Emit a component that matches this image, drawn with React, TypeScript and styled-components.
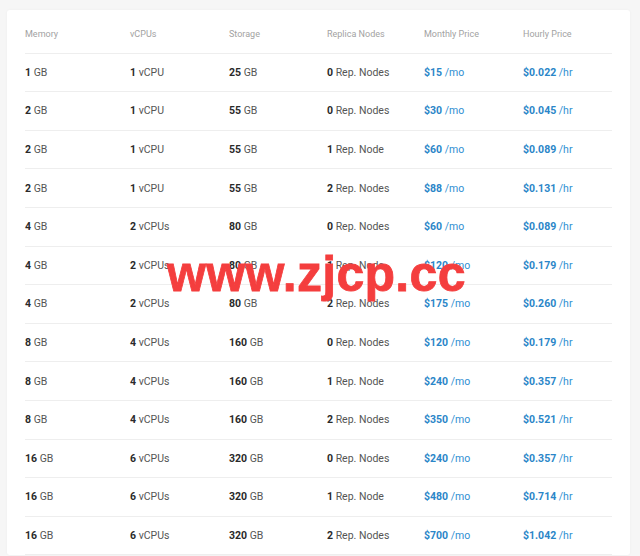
import styled, { createGlobalStyle } from "styled-components";

type Plan = {
  mem: number;
  cpu: number;
  disk: number;
  nodes: number;
  month: number;
  hour: string;
};

const plans: Plan[] = [
  { mem: 1, cpu: 1, disk: 25, nodes: 0, month: 15, hour: "0.022" },
  { mem: 2, cpu: 1, disk: 55, nodes: 0, month: 30, hour: "0.045" },
  { mem: 2, cpu: 1, disk: 55, nodes: 1, month: 60, hour: "0.089" },
  { mem: 2, cpu: 1, disk: 55, nodes: 2, month: 88, hour: "0.131" },
  { mem: 4, cpu: 2, disk: 80, nodes: 0, month: 60, hour: "0.089" },
  { mem: 4, cpu: 2, disk: 80, nodes: 1, month: 120, hour: "0.179" },
  { mem: 4, cpu: 2, disk: 80, nodes: 2, month: 175, hour: "0.260" },
  { mem: 8, cpu: 4, disk: 160, nodes: 0, month: 120, hour: "0.179" },
  { mem: 8, cpu: 4, disk: 160, nodes: 1, month: 240, hour: "0.357" },
  { mem: 8, cpu: 4, disk: 160, nodes: 2, month: 350, hour: "0.521" },
  { mem: 16, cpu: 6, disk: 320, nodes: 0, month: 240, hour: "0.357" },
  { mem: 16, cpu: 6, disk: 320, nodes: 1, month: 480, hour: "0.714" },
  { mem: 16, cpu: 6, disk: 320, nodes: 2, month: 700, hour: "1.042" },
];

const headers = [
  "Memory",
  "vCPUs",
  "Storage",
  "Replica Nodes",
  "Monthly Price",
  "Hourly Price",
];

const GlobalStyle = createGlobalStyle`
  html, body {
    margin: 0;
    padding: 0;
    background: #f6f6f6;
    font-family: Roboto, "Liberation Sans", sans-serif;
    overflow: hidden;
  }
`;

const Page = styled.div`
  position: relative;
  width: 640px;
  height: 556px;
  padding: 10px 10px 0 7px;
  box-sizing: border-box;
  overflow: hidden;
`;

const Card = styled.div`
  background: #fff;
  padding: 5px 18px 0 18px;
  box-shadow: 0 0 3px rgba(0, 0, 0, 0.04);
  border-radius: 3px;
`;

const Row = styled.div<{ $head?: boolean }>`
  display: grid;
  grid-template-columns: 105px 99px 98px 97px 99px 1fr;
  align-items: center;
  height: 38.6px;
  box-sizing: border-box;
  border-bottom: 1px solid #eeeeee;
  font-size: ${(p) => (p.$head ? "9px" : "10.5px")};
  color: ${(p) => (p.$head ? "#a2a2a2" : "#555")};
`;

const Cell = styled.div<{ $price?: boolean }>`
  white-space: nowrap;
  color: ${(p) => (p.$price ? "#2f8fd2" : "inherit")};

  b {
    font-weight: 700;
    color: ${(p) => (p.$price ? "#2b86c8" : "#2a2a2a")};
  }
`;

const Watermark = styled.div`
  position: absolute;
  left: 167px;
  top: 245px;
  font-family: "Liberation Sans", Arial, sans-serif;
  font-weight: 700;
  font-size: 50px;
  letter-spacing: 0.3px;
  color: #f43e3e;
  -webkit-text-stroke: 0.8px #f43e3e;
  pointer-events: none;
`;

export default function App() {
  return (
    <Page>
      <GlobalStyle />
      <Card>
        <Row $head>
          {headers.map((h) => (
            <Cell key={h}>{h}</Cell>
          ))}
        </Row>
        {plans.map((p, i) => (
          <Row key={i}>
            <Cell>
              <b>{p.mem}</b> GB
            </Cell>
            <Cell>
              <b>{p.cpu}</b> {p.cpu > 1 ? "vCPUs" : "vCPU"}
            </Cell>
            <Cell>
              <b>{p.disk}</b> GB
            </Cell>
            <Cell>
              <b>{p.nodes}</b> {p.nodes === 1 ? "Rep. Node" : "Rep. Nodes"}
            </Cell>
            <Cell $price>
              <b>${p.month}</b> /mo
            </Cell>
            <Cell $price>
              <b>${p.hour}</b> /hr
            </Cell>
          </Row>
        ))}
      </Card>
      <Watermark>www.zjcp.cc</Watermark>
    </Page>
  );
}
